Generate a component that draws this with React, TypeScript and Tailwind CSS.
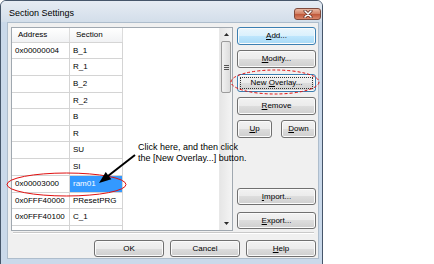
import React from "react";

const font = { fontFamily: '"Liberation Sans", Arial, sans-serif' };

type BtnProps = {
  children: React.ReactNode;
  className?: string;
  variant?: "normal" | "default" | "focus";
};

function Btn({ children, className = "", variant = "normal" }: BtnProps) {
  const base =
    "relative flex items-center justify-center rounded-[3px] border text-[8px] leading-none text-black shadow-[inset_0_0_0_1px_#fbfbfb]";
  const look =
    variant === "default"
      ? "border-[#3c7fb1] bg-[linear-gradient(to_bottom,#eaf6fd_0%,#d9f0fc_50%,#bee6fd_50%,#a7d9f5_100%)]"
      : variant === "focus"
      ? "border-[#3c7fb1] bg-[linear-gradient(to_bottom,#f2f2f2_0%,#ebebeb_50%,#dddddd_50%,#cfcfcf_100%)]"
      : "border-[#707070] bg-[linear-gradient(to_bottom,#f2f2f2_0%,#ebebeb_50%,#dddddd_50%,#cfcfcf_100%)]";
  return (
    <div className={`${base} ${look} ${className}`}>
      {variant === "focus" && (
        <div className="absolute inset-[2px] border border-dotted border-[#333]" />
      )}
      <span className="relative">{children}</span>
    </div>
  );
}

const rows: { a: string; s: string; h: string; sel?: boolean }[] = [
  { a: "0x00000004", s: "B_1", h: "h-[16px]" },
  { a: "", s: "R_1", h: "h-[17px]" },
  { a: "", s: "B_2", h: "h-[17px]" },
  { a: "", s: "R_2", h: "h-[16px]" },
  { a: "", s: "B", h: "h-[17px]" },
  { a: "", s: "R", h: "h-[16px]" },
  { a: "", s: "SU", h: "h-[17px]" },
  { a: "", s: "SI", h: "h-[17px]" },
  { a: "0x00003000", s: "ram01", h: "h-[17px]", sel: true },
  { a: "0x0FFF40000", s: "PResetPRG", h: "h-[16px]" },
  { a: "0x0FFF40100", s: "C_1", h: "h-[17px]" },
];

export default function App() {
  return (
    <div
      className="relative flex h-[264px] w-[434px] overflow-hidden bg-white"
      style={font}
    >
      {/* Window */}
      <div className="flex h-[272px] w-[323px] shrink-0 flex-col rounded-t-[6px] border border-[#46566a] bg-[#cad9ea]">
        {/* Title bar */}
        <div className="flex h-[21px] items-start justify-between rounded-t-[5px] bg-[linear-gradient(to_bottom,#e6ecf3,#d3deea)]">
          <div className="pl-[8px] pt-[7px] text-[9px] leading-[11px] text-black">
            Section Settings
          </div>
          <div className="mr-[1px] mt-[7px] flex h-[12px] w-[27px] items-center justify-center rounded-[3px] border border-[#7f4a3c] bg-[linear-gradient(to_bottom,#e9b8a2_0%,#d48468_45%,#c05a3c_55%,#d9866a_100%)]">
            <svg width="10" height="8" viewBox="0 0 10 8">
              <path
                d="M2 1 L8 7 M8 1 L2 7"
                stroke="#5a2a20"
                strokeWidth="3"
                strokeLinecap="round"
              />
              <path
                d="M2 1 L8 7 M8 1 L2 7"
                stroke="#ffffff"
                strokeWidth="1.6"
                strokeLinecap="round"
              />
            </svg>
          </div>
        </div>

        {/* Client area */}
        <div className="ml-[6px] mr-[3px] flex h-[237px] flex-col border border-[#aebdcc] bg-[#f0f0f0] pl-[3px] pr-[2px] pt-[4px]">
          <div className="flex h-[204px] gap-[4px]">
            {/* List view */}
            <div className="flex h-[204px] w-[222px] border border-[#a0a8b0] bg-white">
              <div className="flex flex-1 flex-col overflow-hidden">
                {/* Header */}
                <div className="flex h-[15px] w-[111px] shrink-0 border-b border-[#d5d5d5] bg-[linear-gradient(to_bottom,#ffffff,#f1f2f4)] text-[8px] text-black">
                  <div className="flex w-[58px] items-center border-r border-[#dcdcdc] pl-[6px]">
                    Address
                  </div>
                  <div className="flex w-[53px] items-center border-r border-[#dcdcdc] pl-[6px]">
                    Section
                  </div>
                </div>
                {rows.map((r, i) => (
                  <div
                    key={i}
                    className={`flex w-[111px] shrink-0 border-b border-[#d4d4d4] text-[8px] text-black ${r.h}`}
                  >
                    <div className="flex w-[58px] items-center border-r border-[#d4d4d4] pl-[3px]">
                      {r.a}
                    </div>
                    <div
                      className={`flex w-[53px] items-center border-r border-[#d4d4d4] pl-[3px] ${
                        r.sel ? "bg-[#3399ff] text-white" : ""
                      }`}
                    >
                      {r.s}
                    </div>
                  </div>
                ))}
                <div className="flex w-[111px] flex-1">
                  <div className="w-[58px] border-r border-[#d4d4d4]" />
                  <div className="w-[53px] border-r border-[#d4d4d4]" />
                </div>
              </div>
              {/* Scrollbar */}
              <div className="flex w-[13px] flex-col border-l border-[#e8e8e8] bg-[linear-gradient(to_right,#e6e6e6,#f4f4f4)]">
                <div className="flex h-[13px] items-center justify-center">
                  <svg width="5" height="3" viewBox="0 0 5 3">
                    <path d="M0 3 L2.5 0 L5 3 Z" fill="#2b2b2b" />
                  </svg>
                </div>
                <div className="mx-[1px] flex h-[52px] items-center justify-center rounded-[2px] border border-[#9b9b9b] bg-[linear-gradient(to_right,#f1f1f1,#dcdcdc)]">
                  <div className="flex flex-col gap-[1px]">
                    <div className="h-px w-[5px] bg-[#555]" />
                    <div className="h-px w-[5px] bg-[#555]" />
                    <div className="h-px w-[5px] bg-[#555]" />
                  </div>
                </div>
                <div className="flex-1" />
                <div className="flex h-[13px] items-center justify-center">
                  <svg width="5" height="3" viewBox="0 0 5 3">
                    <path d="M0 0 L2.5 3 L5 0 Z" fill="#2b2b2b" />
                  </svg>
                </div>
              </div>
            </div>

            {/* Button column */}
            <div className="flex w-[79px] flex-col pb-[2px]">
              <Btn variant="default" className="h-[18px]">
                <u>A</u>dd...
              </Btn>
              <Btn className="mt-[5px] h-[18px]">
                <u>M</u>odify...
              </Btn>
              <Btn variant="focus" className="mt-[6px] h-[18px]">
                New <u>O</u>verlay...
              </Btn>
              <Btn className="mt-[5px] h-[18px]">
                <u>R</u>emove
              </Btn>
              <div className="mt-[5px] flex justify-between">
                <Btn className="h-[18px] w-[35px]">
                  <u>U</u>p
                </Btn>
                <Btn className="h-[18px] w-[35px]">
                  <u>D</u>own
                </Btn>
              </div>
              <Btn className="mt-auto h-[17px]">
                <u>I</u>mport...
              </Btn>
              <Btn className="mt-[7px] h-[17px]">
                <u>E</u>xport...
              </Btn>
            </div>
          </div>

          {/* Separator */}
          <div className="mx-[2px] mt-[1px] h-px bg-[#c9c9c9]" />
          <div className="mx-[2px] h-px bg-white" />

          {/* Bottom buttons */}
          <div className="mt-[6px] flex justify-end gap-[6px]">
            <Btn className="h-[17px] w-[70px]">OK</Btn>
            <Btn className="h-[17px] w-[70px]">Cancel</Btn>
            <Btn className="h-[17px] w-[70px]">
              <u>H</u>elp
            </Btn>
          </div>
        </div>
      </div>

      {/* Annotation text */}
      <div className="absolute left-[138px] top-[142px] text-[9px] leading-[11px] text-black">
        <div>Click here, and then click</div>
        <div>the [New Overlay...] button.</div>
      </div>

      {/* Overlays: ellipses and arrow */}
      <svg
        className="pointer-events-none absolute left-0 top-0"
        width="434"
        height="264"
        viewBox="0 0 434 264"
      >
        <ellipse
          cx="275"
          cy="82"
          rx="44"
          ry="12"
          fill="none"
          stroke="#e01010"
          strokeWidth="1"
          strokeDasharray="3 2"
        />
        <ellipse
          cx="66.5"
          cy="184.5"
          rx="59.5"
          ry="11.5"
          fill="none"
          stroke="#e01010"
          strokeWidth="1"
        />
        <line
          x1="135"
          y1="155"
          x2="108"
          y2="176"
          stroke="#000"
          strokeWidth="2"
        />
        <polygon points="99,183 111.3,179.2 105.7,172" fill="#000" />
      </svg>
    </div>
  );
}
